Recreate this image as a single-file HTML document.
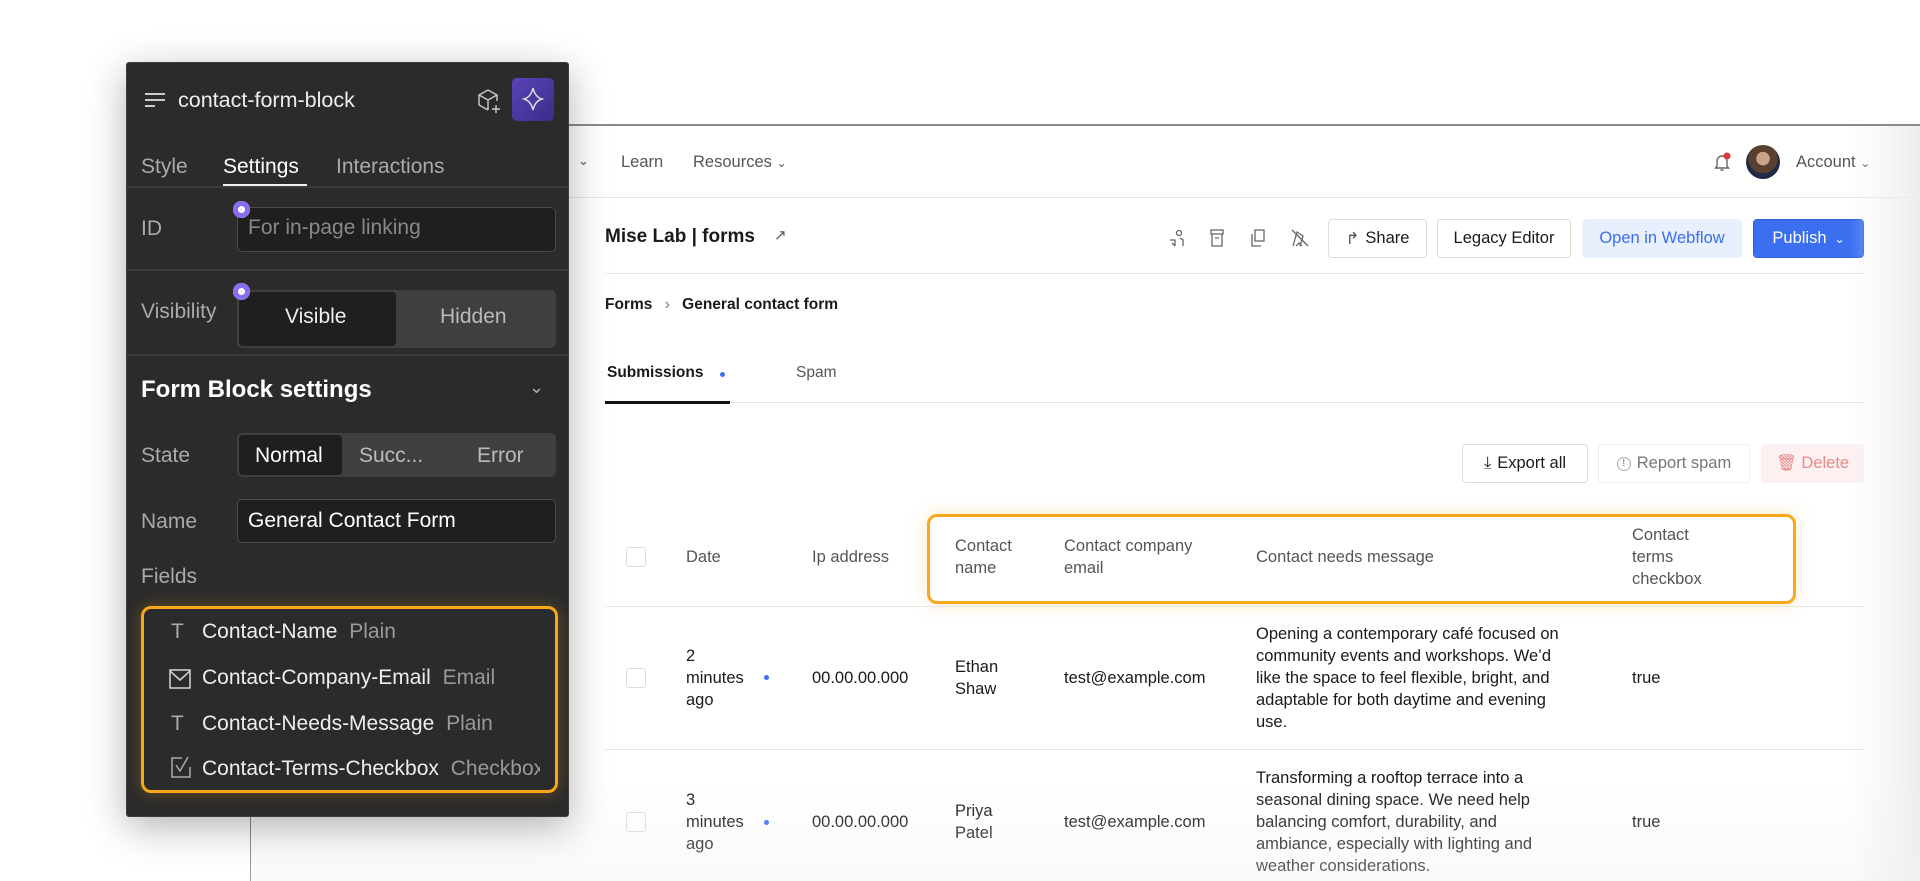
<!DOCTYPE html>
<html><head><meta charset="utf-8"><style>
*{box-sizing:border-box;margin:0;padding:0}
body{width:1920px;height:881px;overflow:hidden;background:#fff;font-family:"Liberation Sans",sans-serif;position:relative;color:#1a1a1a}
.a{position:absolute;white-space:nowrap}
.t{font-size:16.5px;line-height:22px}
.g{color:#555}
.btn{position:absolute;border:1px solid #ddd;border-radius:4px;height:39px;display:flex;align-items:center;justify-content:center;font-size:16.5px;background:#fff}
.hline{position:absolute;height:1px;background:#e6e6e6}
.cb{position:absolute;width:20px;height:20px;border:1.5px solid #ddd;border-radius:3px;background:#fff}
.pn{font-size:20px;color:#aaa}
.dot{position:absolute;width:5px;height:5px;border-radius:50%;background:#3b6ff0}
</style></head><body>
<div class="a" style="left:569px;top:124px;width:1351px;height:2px;background:#8a8a8a"></div>
<div class="a" style="left:250px;top:817px;width:1px;height:64px;background:#777"></div>
<div class="hline" style="left:569px;top:197px;width:1351px"></div>
<div class="a g" style="left:578px;top:153px;font-size:13px">⌄</div>
<div class="a g t" style="left:621px;top:151px">Learn</div>
<div class="a g t" style="left:693px;top:151px">Resources <span style="font-size:12px">⌄</span></div>
<svg class="a" style="left:1710px;top:150px" width="24" height="24" viewBox="0 0 24 24"><path d="M7 16V11a5 5 0 0 1 10 0v5l1.5 2h-13zM10.5 20h3" fill="none" stroke="#666" stroke-width="1.4"/><circle cx="17" cy="6" r="3.5" fill="#d63b3b"/></svg>
<div class="a" style="left:1746px;top:145px;width:34px;height:34px;border-radius:50%;background:radial-gradient(circle at 50% 40%,#c9a48a 0 25%,#5a4030 26% 55%,#1f2a44 56%)"></div>
<div class="a g t" style="left:1796px;top:151px">Account <span style="font-size:12px">⌄</span></div>

<div class="a" style="left:605px;top:226px;font-size:19px;font-weight:bold">Mise Lab | forms</div>
<div class="a g" style="left:774px;top:226px;font-size:15px">↗</div>
<svg class="a" style="left:1166px;top:226px" width="150" height="24" viewBox="0 0 150 24" fill="none" stroke="#666" stroke-width="1.3">
<circle cx="13" cy="7" r="2.5"/><path d="M4 14h5v6M9 20l-3-3M14 12l3 2v6"/>
<rect x="45" y="4" width="12" height="4"/><path d="M46 8v12h10V8M49 12h4"/>
<rect x="89" y="4" width="9" height="11"/><path d="M86 8v12h9"/>
<path d="M127 20l4-14 6 4-3 10M126 4l16 16M130 20l3-3 3 3"/>
</svg>
<div class="btn" style="left:1328px;top:219px;width:99px"><span style="color:#555;margin-right:6px">↱</span>Share</div>
<div class="btn" style="left:1437px;top:219px;width:134px">Legacy Editor</div>
<div class="btn" style="left:1582px;top:219px;width:160px;background:#e8effd;border-color:#e8effd;color:#3b6ff0">Open in Webflow</div>
<div class="btn" style="left:1753px;top:219px;width:111px;background:#3b6ff0;border-color:#2f62e0;color:#fff">Publish <span style="font-size:12px;margin-left:8px">⌄</span></div>
<div class="hline" style="left:605px;top:273px;width:1259px"></div>

<div class="a t" style="left:605px;top:294px;font-weight:bold;font-size:15.5px">Forms <span style="color:#777;font-weight:normal;margin:0 8px">›</span> General contact form</div>
<div class="a t" style="left:607px;top:362px;font-weight:bold;font-size:15.5px">Submissions</div>
<div class="dot" style="left:720px;top:372px"></div>
<div class="a t g" style="left:796px;top:362px;font-size:15.5px">Spam</div>
<div class="hline" style="left:605px;top:402px;width:1259px"></div>
<div class="a" style="left:605px;top:401px;width:125px;height:3px;background:#111"></div>

<div class="btn" style="left:1462px;top:444px;width:126px"><span style="margin-right:6px">⤓</span>Export all</div>
<div class="btn" style="left:1598px;top:444px;width:152px;color:#777;border-color:#eee"><span style="margin-right:6px;border:1px solid #aaa;border-radius:50%;width:14px;height:14px;font-size:10px;display:inline-flex;align-items:center;justify-content:center">!</span>Report spam</div>
<div class="btn" style="left:1761px;top:444px;width:103px;background:#fdf0f0;border-color:#fdf0f0;color:#e58a8a">🗑 Delete</div>

<div class="a" style="left:927px;top:514px;width:869px;height:90px;border:3px solid #f8a81a;border-radius:10px;box-shadow:0 0 18px rgba(248,168,26,.25)"></div>
<div class="cb" style="left:626px;top:547px"></div>
<div class="a t g" style="left:686px;top:546px">Date</div>
<div class="a t g" style="left:812px;top:546px">Ip address</div>
<div class="a t g" style="left:955px;top:535px">Contact<br>name</div>
<div class="a t g" style="left:1064px;top:535px">Contact company<br>email</div>
<div class="a t g" style="left:1256px;top:546px">Contact needs message</div>
<div class="a t g" style="left:1632px;top:524px">Contact<br>terms<br>checkbox</div>
<div class="hline" style="left:605px;top:606px;width:1259px"></div>

<div class="cb" style="left:626px;top:668px"></div>
<div class="a t" style="left:686px;top:645px">2<br>minutes<br>ago</div>
<div class="dot" style="left:764px;top:675px"></div>
<div class="a t" style="left:812px;top:667px">00.00.00.000</div>
<div class="a t" style="left:955px;top:656px">Ethan<br>Shaw</div>
<div class="a t" style="left:1064px;top:667px">test@example.com</div>
<div class="a t" style="left:1256px;top:623px">Opening a contemporary café focused on<br>community events and workshops. We’d<br>like the space to feel flexible, bright, and<br>adaptable for both daytime and evening<br>use.</div>
<div class="a t" style="left:1632px;top:667px">true</div>
<div class="hline" style="left:605px;top:749px;width:1259px"></div>

<div class="cb" style="left:626px;top:812px"></div>
<div class="a t" style="left:686px;top:789px">3<br>minutes<br>ago</div>
<div class="dot" style="left:764px;top:820px"></div>
<div class="a t" style="left:812px;top:811px">00.00.00.000</div>
<div class="a t" style="left:955px;top:800px">Priya<br>Patel</div>
<div class="a t" style="left:1064px;top:811px">test@example.com</div>
<div class="a t" style="left:1256px;top:767px">Transforming a rooftop terrace into a<br>seasonal dining space. We need help<br>balancing comfort, durability, and<br>ambiance, especially with lighting and<br>weather considerations.</div>
<div class="a t" style="left:1632px;top:811px">true</div>

<div class="a" style="left:1850px;top:126px;width:70px;height:755px;background:linear-gradient(90deg,rgba(240,240,240,0),rgba(236,236,236,.9))"></div>
<div class="a" style="left:250px;top:780px;width:1670px;height:101px;background:linear-gradient(180deg,rgba(240,240,240,0),rgba(240,240,240,.35))"></div>

<div class="a" style="left:126px;top:62px;width:443px;height:755px;background:#2b2b2b;border:1px solid #3d3d3d;border-radius:3px;box-shadow:0 10px 40px rgba(0,0,0,.3)">
 <svg class="a" style="left:17px;top:28px" width="24" height="20" viewBox="0 0 24 20"><path d="M1 3h20M1 9h20M1 15h10" stroke="#ccc" stroke-width="2"/></svg>
 <div class="a" style="left:51px;top:25px;font-size:21.5px;color:#eee">contact-form-block</div>
 <svg class="a" style="left:349px;top:24px" width="28" height="30" viewBox="0 0 28 30" fill="none" stroke="#ccc" stroke-width="1.4"><path d="M12 3l9 5v6M12 3L3 8v10l9 5M3 8l9 5 9-5M12 13v10M20 18v8M16 22h8"/></svg>
 <div class="a" style="left:385px;top:15px;width:42px;height:43px;border-radius:5px;background:linear-gradient(135deg,#5a44b8,#3c2c8a)"><svg width="42" height="43" viewBox="0 0 42 43"><path d="M21 10q2 9 9 11q-7 2-9 11q-2-9-9-11q7-2 9-11z" fill="none" stroke="#ddd" stroke-width="1.5"/></svg></div>
 <div class="a pn" style="left:14px;top:92px;font-size:21px">Style</div>
 <div class="a" style="left:96px;top:92px;font-size:21px;color:#fff">Settings</div>
 <div class="a pn" style="left:209px;top:92px;font-size:21px">Interactions</div>
 <div class="a" style="left:96px;top:121px;width:84px;height:3px;background:#eee"></div>
 <div class="a" style="left:0;top:123px;width:441px;height:2px;background:#3a3a3a"></div>
 <div class="a pn" style="left:14px;top:154px;font-size:21px">ID</div>
 <div class="a" style="left:110px;top:144px;width:319px;height:45px;background:#1f1f1f;border:1px solid #4a4a4a;border-radius:5px"></div>
 <div class="a" style="left:121px;top:153px;font-size:21px;color:#888">For in-page linking</div>
 <div class="a" style="left:106px;top:138px;width:17px;height:17px;border-radius:50%;background:#8a6cf0;box-shadow:inset 0 0 0 5px #8a6cf0,inset 0 0 0 8px #fff"></div>
 <div class="a" style="left:0;top:206px;width:441px;height:2px;background:#3a3a3a"></div>
 <div class="a pn" style="left:14px;top:237px;font-size:21px">Visibility</div>
 <div class="a" style="left:110px;top:227px;width:319px;height:58px;background:#3f3f3f;border-radius:5px"></div>
 <div class="a" style="left:112px;top:229px;width:157px;height:54px;background:#1f1f1f;border-radius:4px"></div>
 <div class="a" style="left:158px;top:242px;font-size:21px;color:#eee">Visible</div>
 <div class="a" style="left:313px;top:242px;font-size:21px;color:#bbb">Hidden</div>
 <div class="a" style="left:106px;top:220px;width:17px;height:17px;border-radius:50%;background:#8a6cf0;box-shadow:inset 0 0 0 5px #8a6cf0,inset 0 0 0 8px #fff"></div>
 <div class="a" style="left:0;top:291px;width:441px;height:2px;background:#3a3a3a"></div>
 <div class="a" style="left:14px;top:313px;font-size:24px;color:#fff;font-weight:bold">Form Block settings</div>
 <div class="a pn" style="left:402px;top:314px;font-size:18px">⌄</div>
 <div class="a pn" style="left:14px;top:381px;font-size:21px">State</div>
 <div class="a" style="left:110px;top:370px;width:319px;height:44px;background:#3f3f3f;border-radius:5px"></div>
 <div class="a" style="left:112px;top:372px;width:103px;height:40px;background:#1f1f1f;border-radius:4px"></div>
 <div class="a" style="left:128px;top:381px;font-size:21px;color:#fff">Normal</div>
 <div class="a" style="left:232px;top:381px;font-size:21px;color:#bbb">Succ...</div>
 <div class="a" style="left:350px;top:381px;font-size:21px;color:#bbb">Error</div>
 <div class="a pn" style="left:14px;top:447px;font-size:21px">Name</div>
 <div class="a" style="left:110px;top:436px;width:319px;height:44px;background:#1f1f1f;border:1px solid #4a4a4a;border-radius:5px"></div>
 <div class="a" style="left:121px;top:446px;font-size:21px;color:#fff">General Contact Form</div>
 <div class="a pn" style="left:14px;top:502px;font-size:21px">Fields</div>
 <div class="a" style="left:14px;top:543px;width:417px;height:187px;border:3px solid #f8a81a;border-radius:10px;box-shadow:0 0 16px rgba(248,168,26,.3)"></div>
 <div class="a pn" style="left:44px;top:557px;font-size:21px">T</div>
 <div class="a" style="left:75px;top:557px;font-size:21px;color:#eee">Contact-Name <span style="color:#999;margin-left:6px">Plain</span></div>
 <svg class="a" style="left:41px;top:605px" width="24" height="22" viewBox="0 0 24 22" fill="none" stroke="#ccc" stroke-width="1.6"><rect x="2" y="2" width="20" height="18"/><path d="M2 3l10 9 10-9"/></svg>
 <div class="a" style="left:75px;top:603px;font-size:21px;color:#eee">Contact-Company-Email <span style="color:#999;margin-left:6px">Email</span></div>
 <div class="a pn" style="left:44px;top:649px;font-size:21px">T</div>
 <div class="a" style="left:75px;top:649px;font-size:21px;color:#eee">Contact-Needs-Message <span style="color:#999;margin-left:6px">Plain</span></div>
 <svg class="a" style="left:43px;top:692px" width="22" height="24" viewBox="0 0 22 24" fill="none" stroke="#aaa" stroke-width="1.5"><path d="M12 3H2v19h18V12"/><path d="M6 10l4 6 8-14"/></svg>
 <div class="a" style="left:75px;top:694px;font-size:21px;color:#eee;width:338px;overflow:hidden">Contact-Terms-Checkbox <span style="color:#999;margin-left:6px">Checkbox</span></div>
</div>
</body></html>
